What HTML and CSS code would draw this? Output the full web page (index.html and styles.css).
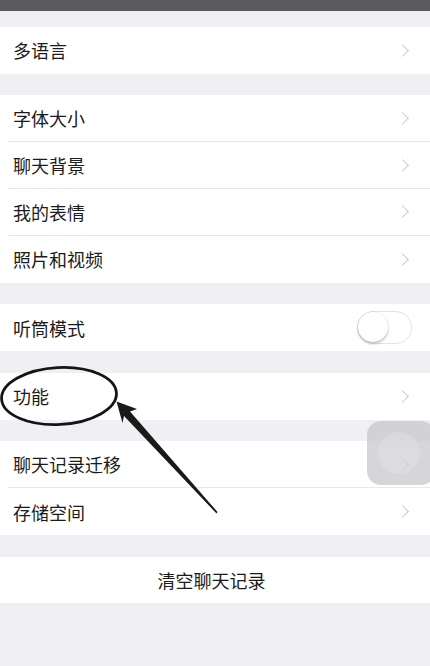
FILE: index.html
```html
<!DOCTYPE html>
<html lang="zh">
<head>
<meta charset="utf-8">
<title>聊天设置</title>
<link rel="stylesheet" href="styles.css">
</head>
<body>
<div class="page">
  <div class="statusbar"></div>
  <div class="gap gap-first"></div>
  <div class="group">
    <div class="row"><span class="label">多语言</span><span class="chev"></span></div>
  </div>
  <div class="gap"></div>
  <div class="group">
    <div class="row"><span class="label">字体大小</span><span class="chev"></span></div>
    <div class="row"><span class="label">聊天背景</span><span class="chev"></span></div>
    <div class="row"><span class="label">我的表情</span><span class="chev"></span></div>
    <div class="row"><span class="label">照片和视频</span><span class="chev"></span></div>
  </div>
  <div class="gap"></div>
  <div class="group">
    <div class="row"><span class="label">听筒模式</span><span class="switch"><span class="knob"></span></span></div>
  </div>
  <div class="gap"></div>
  <div class="group">
    <div class="row"><span class="label">功能</span><span class="chev"></span></div>
  </div>
  <div class="gap"></div>
  <div class="group">
    <div class="row"><span class="label">聊天记录迁移</span><span class="chev"></span></div>
    <div class="row"><span class="label">存储空间</span><span class="chev"></span></div>
  </div>
  <div class="gap"></div>
  <div class="group">
    <div class="row row-center"><span class="label">清空聊天记录</span></div>
  </div>

  <div class="assist"><span class="assist-dot"></span></div>

  <svg class="annot" width="430" height="666" viewBox="0 0 430 666" xmlns="http://www.w3.org/2000/svg">
    <ellipse cx="59" cy="396" rx="57.5" ry="28.5" fill="none" stroke="#151515" stroke-width="2.8" transform="rotate(-3 59 396)"/>
    <polygon points="116.5,401.5 137,409 130,411.5 217.5,512 216.5,513.5 124,416 122.5,423" fill="#1a1a1a"/>
  </svg>
</div>
</body>
</html>
```

FILE: styles.css
```css
html, body {
  margin: 0;
  padding: 0;
}
body {
  background: #efeff4;
  font-family: "Noto Sans CJK SC", "Noto Sans", sans-serif;
  color: #1b1b1b;
}
.page {
  position: relative;
  width: 430px;
  height: 666px;
  overflow: hidden;
  background: #efeff4;
}
.statusbar {
  height: 11px;
  background: #5a595e;
}
.gap {
  height: 21.7px;
}
.gap-first {
  height: 16px;
}
.group {
  background: #fff;
}
.row {
  height: 46.8px;
  display: flex;
  align-items: center;
  justify-content: space-between;
  box-sizing: border-box;
  margin-left: 8px;
  padding: 0 19px 0 5px;
  border-bottom: 1px solid #e8e8ec;
}
.row:last-child {
  border-bottom: none;
}
.label {
  font-size: 18px;
  line-height: 24px;
}
.row-center {
  justify-content: center;
  margin-left: 0;
  padding: 0 7px 0 0;
}
.chev {
  width: 8px;
  height: 8px;
  border-top: 1.5px solid #c8c8cd;
  border-right: 1.5px solid #c8c8cd;
  transform: rotate(45deg);
  margin-right: 4px;
}
.switch {
  position: relative;
  width: 53px;
  height: 31px;
  border-radius: 16px;
  border: 1.5px solid #e3e3e6;
  background: #fff;
  margin-right: -1px;
}
.knob {
  position: absolute;
  left: 0;
  top: 0;
  width: 30px;
  height: 30px;
  border-radius: 50%;
  background: #fff;
  box-shadow: 0 2px 3px rgba(0,0,0,0.22), 0 0 0 0.5px rgba(0,0,0,0.08);
}
.assist {
  position: absolute;
  left: 367px;
  top: 421px;
  width: 68px;
  height: 64px;
  border-radius: 14px;
  background: rgba(198, 198, 202, 0.72);
  display: flex;
  align-items: center;
  justify-content: center;
}
.assist-dot {
  width: 42px;
  height: 42px;
  border-radius: 50%;
  background: rgba(240, 240, 242, 0.25);
  margin-right: 4px;
}
.annot {
  position: absolute;
  left: 0;
  top: 0;
  pointer-events: none;
}
```
